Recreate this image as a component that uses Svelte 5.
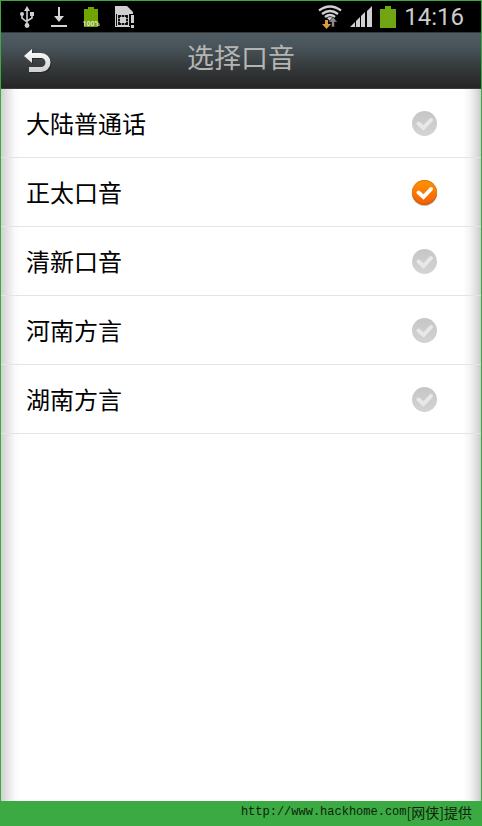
<script lang="ts">
  const accents = ['大陆普通话', '正太口音', '清新口音', '河南方言', '湖南方言'];
  let selected = $state('正太口音');
</script>

<div class="screen">
  <div class="status">
    <div class="status-left">
      <svg width="14" height="22" viewBox="0 0 14 22" fill="none" stroke="#cfcfcf" stroke-width="1.6">
        <path d="M7 4v14M2 9v3l5 4M12 8v4l-5 3" />
        <path d="M7 0l3 5H4z" fill="#cfcfcf" stroke="none" />
        <circle cx="7" cy="19.5" r="2.4" fill="#cfcfcf" stroke="none" />
        <circle cx="2" cy="8" r="2" fill="#cfcfcf" stroke="none" />
        <path d="M10 6h4v4h-4z" fill="#cfcfcf" stroke="none" />
      </svg>
      <svg width="16" height="22" viewBox="0 0 16 22" fill="#d4d4d4">
        <path d="M7 1h2v9h4l-5 6-5-6h4zM0 19h16v2H0z" />
      </svg>
      <svg class="charge" width="18" height="22" viewBox="0 0 18 22">
        <path d="M6 1h6v2h4v18H2V3h4z" fill="#70a400" />
        <text x="9" y="20" text-anchor="middle" class="percent">100%</text>
      </svg>
      <svg width="20" height="22" viewBox="0 0 20 22">
        <path d="M0 0h12l6 6v15H0z" fill="#cfcfcf" />
        <path d="M1 8h14v12H1z" fill="#111" />
        <path d="M2.500 8.500v11M13.500 8.500v11M2 8.500h12M2 19.500h12" fill="none" stroke="#cfcfcf" />
        <path d="M5 11h6v6H5z" fill="#cfcfcf" />
        <path d="M6.500 9v2M9.500 9v2M6.500 17v2M9.500 17v2M3 12.500h2M3 15.500h2M11 12.500h2M11 15.500h2" fill="none" stroke="#8b8b8b" />
        <path d="M15 8h5v14h-5z" fill="#000" />
        <path d="M16 9h3v8h-3zM16 19h3v3h-3z" fill="#cfcfcf" />
      </svg>
    </div>
    <div class="status-right">
      <svg width="24" height="24" viewBox="0 0 24 24" fill="none">
        <path d="M1 5.500Q12-2.500 23 5.500M4 9Q12 3 20 9M7 12Q12 8 17 12" stroke="#cfcfcf" stroke-width="2.400" />
        <path d="M9 13q3-2 6 0l-3 3z" fill="#cfcfcf" />
        <path d="M7 15h3v4h3l-4.500 5L4 19h3z" fill="#dc9a3c" />
        <path d="M13.500 22v-5h-3l4.500-5 4.500 5h-3v5z" fill="#8b8b8b" stroke="#000" stroke-width=".5" />
      </svg>
      <svg width="22" height="22" viewBox="0 0 22 22" fill="#d0d0d0">
        <path d="M0 21l5-5v5zM6 15l4-4v10H6zM11 10l4-4v15h-4zM17 5l5-5v21h-5z" />
      </svg>
      <svg width="16" height="22" viewBox="0 0 16 22">
        <path d="M5 0h6v3h5v19H0V3h5z" fill="#71a513" />
      </svg>
      <span class="clock">14:16</span>
    </div>
  </div>

  <header>
    <button class="back" aria-label="返回">
      <svg width="30" height="28" viewBox="0 0 30 28">
        <defs>
          <linearGradient id="arrow" x2="0" y2="1">
            <stop offset="0" stop-color="#fff" />
            <stop offset="1" stop-color="#cfcfcf" />
          </linearGradient>
        </defs>
        <path d="M1 8l8-7v4h9a9.500 9.500 0 0 1 0 19H6v-5h12a4.500 4.500 0 0 0 0-9H9v5z" transform="translate(1 1)" fill="#1c1c1c" opacity=".6" />
        <path d="M1 8l8-7v4h9a9.500 9.500 0 0 1 0 19H6v-5h12a4.500 4.500 0 0 0 0-9H9v5z" fill="url(#arrow)" />
      </svg>
    </button>
    <h1>选择口音</h1>
  </header>

  <main>
    {#each accents as accent}
      <label class="row">
        <span>{accent}</span>
        <span class="mark">
          <input type="radio" name="accent" value={accent} bind:group={selected} />
          <svg width="25" height="25" viewBox="0 0 25 25">
            <path d="M6.500 12.500l5 4.500 7.500-8" fill="none" stroke-width="4" stroke-linecap="round" />
          </svg>
        </span>
      </label>
    {/each}
  </main>

  <footer><span class="url">http://www.hackhome.com</span><span class="site">[网侠]提供</span></footer>
</div>

<style>
  :global(body) { background: #3caa42; }
  .screen {
    box-sizing: border-box;
    min-height: 100vh;
    display: flex;
    flex-direction: column;
    border: 1px solid #3caa42;
    border-bottom: 0;
    font-family: "Noto Sans CJK SC", sans-serif;
  }
  svg { display: block; }

  .status {
    display: flex;
    justify-content: space-between;
    align-items: center;
    height: 31px;
    padding: 0 17px 0 19px;
    background: #000;
  }
  .status-left { display: flex; align-items: center; gap: 17px; }
  .charge { margin: 0 -2px; }
  .status-right { display: flex; align-items: center; gap: 8px; }
  .percent { font: bold 7px Roboto, sans-serif; fill: #e2e8d0; }
  .clock { font: 24px/30px Roboto, sans-serif; color: #cdcdcd; }

  header {
    display: grid;
    grid-template-columns: 72px 1fr 72px;
    align-items: center;
    box-sizing: border-box;
    height: 57px;
    padding-bottom: 8px;
    border-top: 1px solid #36393c;
    border-bottom: 1px solid #3b3c3e;
    background: linear-gradient(#4f5c64, #48545a 25%, #343839 65%, #252526);
  }
  .back { border: 0; background: none; padding: 10px 0 0 22px; cursor: pointer; }
  h1 {
    margin: 0;
    font-size: 27px;
    line-height: 34px;
    font-weight: 400;
    text-align: center;
    color: #b4b4b4;
  }

  main {
    flex: 1;
    background: linear-gradient(90deg, #cfcfcf, #e9e9e9 8px, #fafafa 14px, #fff 20px, #fff calc(100% - 18px), #f4f4f4 calc(100% - 11px), #dcdcdc calc(100% - 4px), #c8c8c8);
  }
  .row {
    display: flex;
    justify-content: space-between;
    align-items: center;
    box-sizing: border-box;
    height: 69px;
    padding: 0 44px 0 25px;
    border-bottom: 1px solid #e4e4e4;
    font-size: 24px;
    line-height: 36px;
    color: #000;
    cursor: pointer;
  }
  .mark { display: grid; }
  .mark input, .mark svg { grid-area: 1 / 1; }
  .mark input {
    appearance: none;
    margin: 0;
    width: 25px;
    height: 25px;
    border-radius: 50%;
    background: linear-gradient(#c6c6c6, #d3d3d3);
  }
  .mark svg { stroke: #e8e8e8; pointer-events: none; }
  .mark input:checked {
    background: linear-gradient(#ff9500, #f85c00);
    box-shadow: inset 0 -1px 1px #b65a16, inset 0 1px 1px #d87d16, 0 1px 1px #bbb;
  }
  .mark input:checked + svg { stroke: #fff; }

  footer {
    display: flex;
    justify-content: flex-end;
    align-items: center;
    box-sizing: border-box;
    height: 25px;
    padding: 0 9px 4px 0;
    background: #3caa42;
    color: #0b1f0c;
  }
  .url { font: 12px/20px "Liberation Mono", monospace; }
  .site { font-size: 14px; line-height: 20px; }
</style>
